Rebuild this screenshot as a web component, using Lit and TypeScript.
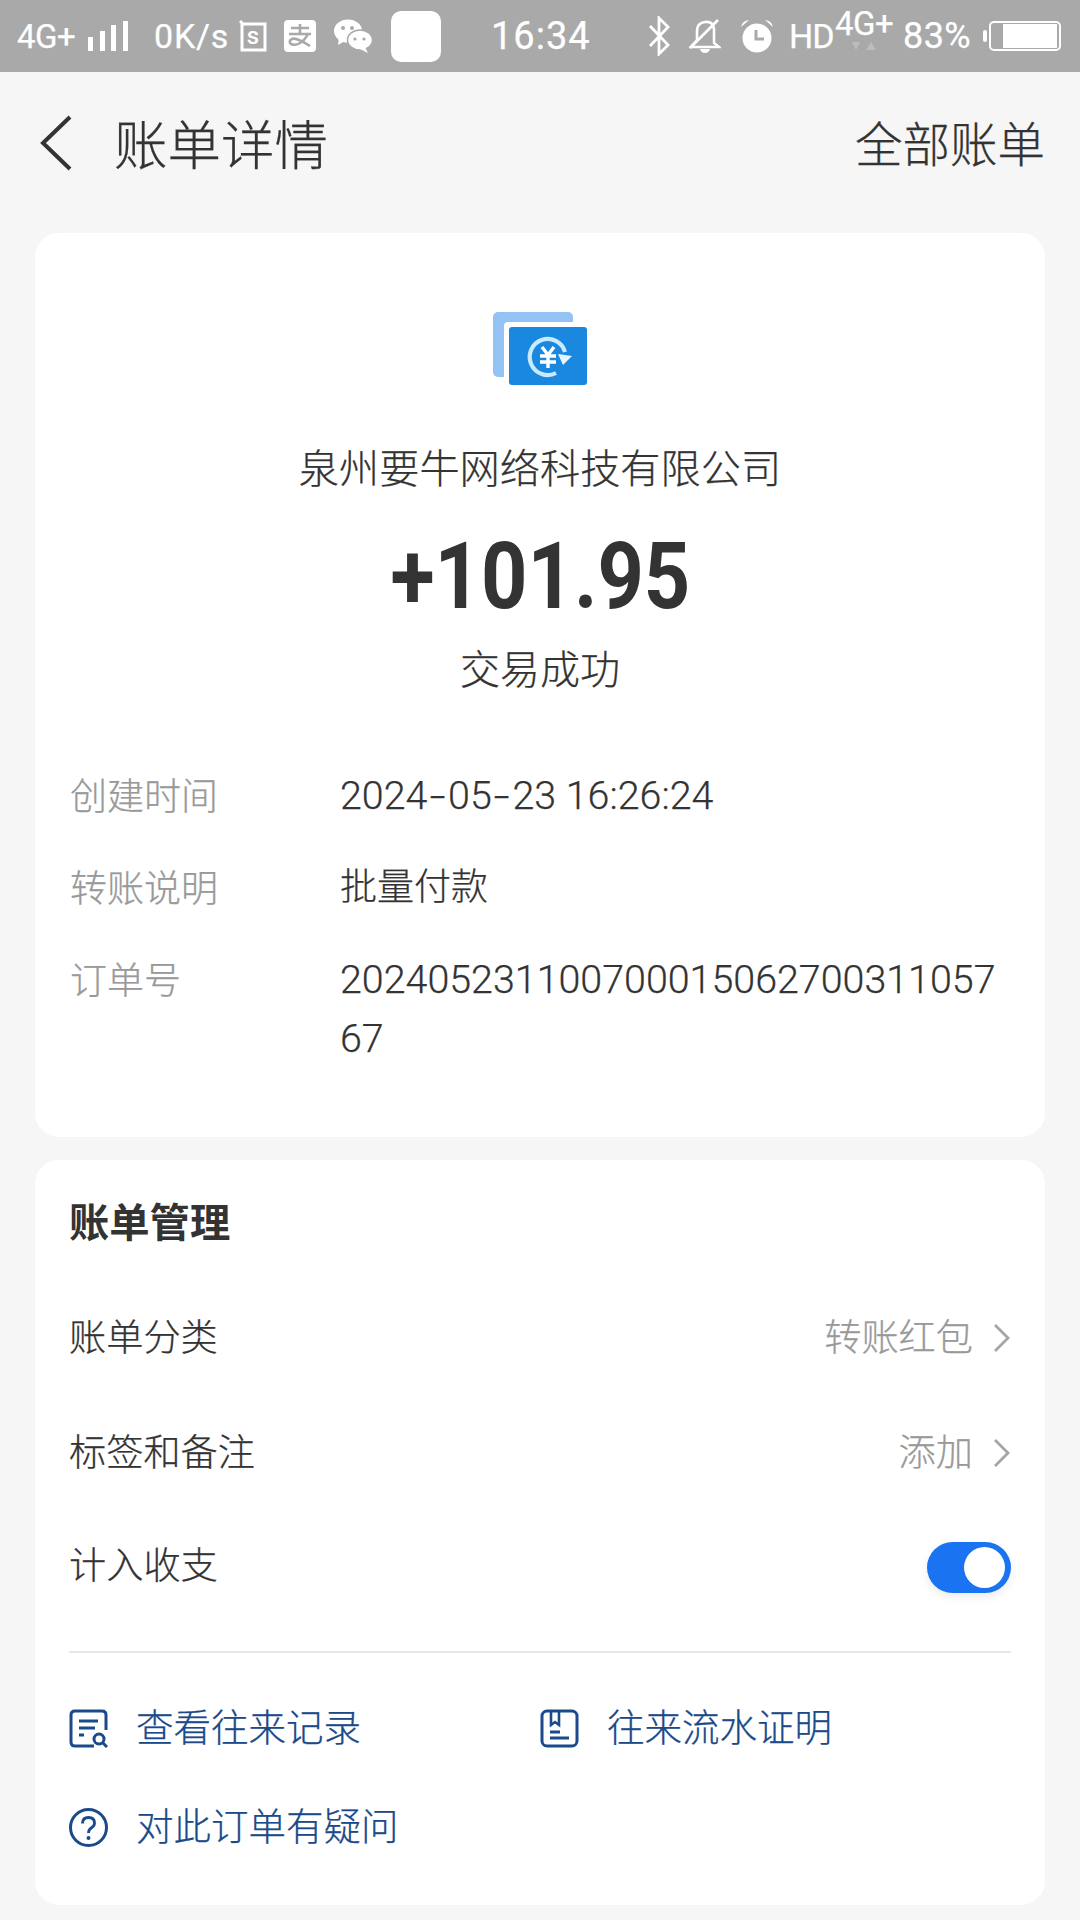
import { LitElement, html, css, svg } from "lit";
import { customElement } from "lit/decorators.js";

const chevron = html`<svg class="chev" width="18" height="30" viewBox="0 0 18 30"><path d="M2 2l13 13L2 28" fill="none" stroke="#a5a5a5" stroke-width="2.8"/></svg>`;

const linkIcons = {
	record: svg`<path d="M37 21V6q0-4-4-4H6Q2 2 2 6v27q0 4 4 4h19" fill="none" stroke="#1a4a8a" stroke-width="3"/>
		<path d="M10 12h19M10 19h16M10 26h5" stroke="#1a4a8a" stroke-width="3"/>
		<circle cx="30" cy="30" r="5" fill="none" stroke="#1a4a8a" stroke-width="3"/>
		<path d="M34 34l4 4" stroke="#1a4a8a" stroke-width="3"/>`,
	proof: svg`<rect x="2" y="2" width="35" height="35" rx="5" fill="none" stroke="#1a4a8a" stroke-width="3"/>
		<path d="M11 2v14l4-3 4 3V2" fill="none" stroke="#1a4a8a" stroke-width="2.600"/>
		<path d="M10 23h10M10 29h19" stroke="#1a4a8a" stroke-width="3"/>`,
	help: svg`<circle cx="19.5" cy="19.5" r="18" fill="none" stroke="#1a4a8a" stroke-width="3"/>
		<path d="M13.5 15.500q0-6 6-6t6 5.500q0 3-3 4.800t-3 5.200" fill="none" stroke="#1a4a8a" stroke-width="2.800"/>
		<circle cx="19.500" cy="30" r="2" fill="#1a4a8a"/>`,
};

@customElement("status-bar")
export class StatusBar extends LitElement {
	static styles = css`
	:host {
		display: flex;
		align-items: center;
		height: 72px;
		background: #a9a9a9;
		color: #fff;
		font-family: Roboto, "Noto Sans", sans-serif;
		font-weight: 400;
		font-size: 33px;
		white-space: nowrap;
	}
	svg { display: block; flex: none; }
	span { display: block; flex: none; }
	.net { margin-left: 17px; width: 59px; letter-spacing: -0.5px; }
	.bars { margin-left: 11px; }
	.speed { margin-left: 25px; width: 74px; font-size: 34px; letter-spacing: 0.8px; }
	.sim { margin-left: 11px; }
	.ali { margin-left: 17px; }
	.wx { margin-left: 18px; }
	.blank { margin-left: 19px; width: 50px; height: 51px; border-radius: 10px; background: #fff; }
	.time { margin-left: 50px; width: 99px; font-size: 38px; letter-spacing: 1px; }
	.bt { margin-left: 58px; }
	.bell { margin-left: 19px; }
	.clock { margin-left: 19px; }
	.hd { margin-left: 15px; width: 41px; font-size: 34px; letter-spacing: -1px; }
	.net2 { margin-left: 5px; width: 58px; display: flex; flex-direction: column; align-items: center; height: 52px; margin-top: -6px; }
	.net2 span { line-height: 34px; font-size: 33px; letter-spacing: -0.5px; }
	.pct { margin-left: 10px; width: 71px; font-size: 36px; letter-spacing: 0.4px; }
	.batt { margin-left: 9px; }
	`;

	render() {
		return html`
<span class="net">4G+</span>
<svg class="bars" width="42" height="32" viewBox="0 0 42 32" fill="#fff">
	<rect x="1" y="17" width="5" height="14"/><rect x="13" y="11" width="5" height="20"/>
	<rect x="24" y="5" width="5" height="26"/><rect x="36" y="1" width="5" height="30"/>
</svg>
<span class="speed">0K/s</span>
<svg class="sim" width="28" height="32" viewBox="0 0 28 32">
	<path d="M1 1l3 3h22v26H3V3" fill="none" stroke="#fff" stroke-width="3"/>
	<text x="14" y="24" text-anchor="middle" fill="#fff" font-size="24" font-weight="500" font-family="Roboto, sans-serif">s</text>
</svg>
<svg class="ali" width="32" height="32" viewBox="0 0 32 32">
	<rect width="32" height="32" rx="4" fill="#fff"/>
	<path d="M7 8h18M16 4v9M5 14h22M24 14q-3 6-8 9t-9 1q-3-3 1-5t18 7" fill="none" stroke="#a9a9a9" stroke-width="2.600"/>
</svg>
<svg class="wx" width="38" height="34" viewBox="0 0 38 34">
	<ellipse cx="14" cy="12" rx="14" ry="11.500" fill="#fff"/>
	<path d="M5 19l-1 7 7-4z" fill="#fff"/>
	<ellipse cx="26" cy="21" rx="12.500" ry="10" fill="#fff" stroke="#a9a9a9" stroke-width="1.500"/>
	<path d="M31 28l3 6-8-4z" fill="#fff"/>
	<circle cx="9" cy="9" r="2" fill="#a9a9a9"/><circle cx="18" cy="9" r="2" fill="#a9a9a9"/>
	<circle cx="21" cy="20" r="1.600" fill="#a9a9a9"/><circle cx="30" cy="20" r="1.600" fill="#a9a9a9"/>
</svg>
<span class="blank"></span>
<span class="time">16:34</span>
<svg class="bt" width="22" height="40" viewBox="0 0 22 40">
	<path d="M2 10l18 19-9 9V2l9 9L2 30" fill="none" stroke="#fff" stroke-width="2.800"/>
</svg>
<svg class="bell" width="32" height="36" viewBox="0 0 32 36">
	<path d="M8 22V13q0-8 8-9t9 7v14l5 4H2z" fill="none" stroke="#fff" stroke-width="2.600"/>
	<path d="M11 31h10q-1 4-5 4t-5-4z" fill="#fff"/>
	<path d="M1 30L29 2" stroke="#fff" stroke-width="2.600"/>
</svg>
<svg class="clock" width="34" height="34" viewBox="0 0 34 34">
	<circle cx="17" cy="19" r="14.500" fill="#fff"/>
	<path d="M1 8q1-6 8-7zM33 8q-1-6-8-7z" fill="#fff"/>
	<path d="M16 11v9h8" fill="none" stroke="#a9a9a9" stroke-width="3"/>
</svg>
<span class="hd">HD</span>
<span class="net2">
	<span>4G+</span>
	<svg width="26" height="10" viewBox="0 0 26 10" fill="#bcbcbc"><path d="M1 1h8L5 9zM15 9l5-8 5 8z"/></svg>
</span>
<span class="pct">83%</span>
<svg class="batt" width="78" height="32" viewBox="0 0 78 32">
	<rect x="0" y="10" width="4" height="12" rx="2" fill="#fff"/>
	<rect x="7" y="2" width="70" height="28" rx="4" fill="none" stroke="#fff" stroke-width="2"/>
	<rect x="20" y="4" width="54" height="24" fill="#fff"/>
</svg>
		`;
	}
}

@customElement("app-root")
export class AppRoot extends LitElement {
	static styles = css`
	:host {
		display: block;
		width: 1080px;
		height: 1920px;
		overflow: hidden;
		background: #f6f6f6;
		color: #333;
		font-family: "Noto Sans CJK SC", sans-serif;
		font-weight: 300;
		-webkit-text-stroke: 0.25px;
	}

	.nav {
		display: flex;
		align-items: center;
		height: 142px;
		padding: 0 35px 0 40px;
	}
	.nav svg { display: block; margin-right: 42px; }
	.nav h1 { margin: 0 0 2px; flex: 1; font-size: 53.500px; font-weight: 300; line-height: 70px; }
	.nav span { font-size: 47.500px; margin-bottom: 4px; }

	.card {
		margin: 0 35px;
		background: #fff;
		border-radius: 24px;
		box-sizing: border-box;
	}

	.summary { margin-top: 19px; padding: 79px 35px 69px; height: 904px; }
	.head { display: flex; flex-direction: column; align-items: center; }
	.company { margin-top: 50px; font-size: 40.200px; line-height: 60px; }
	.amount {
		margin-top: 26px;
		font-family: Roboto, sans-serif;
		font-size: 92px;
		font-weight: 700;
		line-height: 110px;
		transform: scaleX(0.88);
		-webkit-text-stroke: 0;
	}
	.state { margin-top: 5px; font-size: 40px; line-height: 60px; }

	.rows { margin-top: 69px; display: flex; flex-direction: column; gap: 33px; }
	.row { display: grid; grid-template-columns: 270px 1fr; line-height: 59px; }
	.row label { font-size: 37px; color: #999; line-height: 56px; }
	.row div {
		font-family: Roboto, "Noto Sans CJK SC", sans-serif;
		font-size: 39.400px;
		font-weight: 300;
		width: 665px;
		word-break: break-all;
	}
	.row div.zh { font-size: 37px; }
	.dash { display: inline-block; margin: 0 4.700px; transform: scaleX(1.45); }

	.manage { margin-top: 23px; padding: 30px 34px 49px; height: 745px; }
	.manage h2 { margin: 0 0 30px; font-size: 40.300px; font-weight: 700; line-height: 60px; -webkit-text-stroke: 0; }
	.item {
		display: flex;
		align-items: center;
		justify-content: space-between;
		height: 115px;
		font-size: 37.200px;
	}
	.text { margin-bottom: 6px; }
	.item.last .text { margin-bottom: 10px; }
	.value { display: flex; align-items: center; color: #999; }
	.chev { margin-left: 20px; }

	.toggle {
		position: relative;
		width: 84px;
		height: 51px;
		border-radius: 26px;
		background: #1a73f0;
		box-shadow: 0 4px 10px rgba(0, 0, 0, 0.08);
	}
	.toggle i {
		position: absolute;
		top: 5px;
		right: 6px;
		width: 41px;
		height: 41px;
		border-radius: 50%;
		background: #fff;
	}

	.line { margin-top: 26px; height: 2px; background: #e8e8e8; }

	.links {
		margin-top: 45px;
		display: grid;
		grid-template-columns: 471px 1fr;
		row-gap: 39px;
	}
	.link {
		display: flex;
		align-items: center;
		height: 60px;
		color: #1a4a8a;
		font-size: 37.500px;
	}
	.link span { margin-bottom: 8px; }
	.link svg { display: block; margin-right: 28px; flex: none; }
	`;

	renderRow(label: string, value: unknown, zh = false) {
		return html`<div class="row"><label>${label}</label><div class="${zh ? "zh" : ""}">${value}</div></div>`;
	}

	renderLink(icon: keyof typeof linkIcons, text: string) {
		return html`<div class="link"><svg width="39" height="39" viewBox="0 0 39 39">${linkIcons[icon]}</svg><span>${text}</span></div>`;
	}

	render() {
		const dash = html`<span class="dash">-</span>`;
		return html`
<status-bar></status-bar>
<div class="nav" lang="zh-CN">
	<svg width="32" height="56" viewBox="0 0 32 56"><path d="M30 2L3 28l27 26" fill="none" stroke="#333" stroke-width="4"/></svg>
	<h1>账单详情</h1>
	<span>全部账单</span>
</div>

<section class="card summary" lang="zh-CN">
	<div class="head">
		<svg width="96" height="74" viewBox="0 0 96 74">
			<rect x="1" y="0" width="80" height="65" rx="5" fill="#93c3f5"/>
			<rect x="12" y="10" width="84" height="64" rx="4" fill="#fff"/>
			<rect x="17" y="15" width="78" height="58" rx="3" fill="#1b88e0"/>
			<path d="M64 61A18 18 0 1 1 73 40" fill="none" stroke="#c8eaff" stroke-width="4.200"/>
			<path d="M66 42l14 2-9 9z" fill="#e4f5ff"/>
			<path d="M50 35l6 8 6-8M48 44h16M48 50h16M56 43v13" fill="none" stroke="#fff" stroke-width="3.400"/>
		</svg>
		<div class="company">泉州要牛网络科技有限公司</div>
		<div class="amount">+101.95</div>
		<div class="state">交易成功</div>
	</div>
	<div class="rows">
		${this.renderRow("创建时间", html`2024${dash}05${dash}23 16:26:24`)}
		${this.renderRow("转账说明", "批量付款", true)}
		${this.renderRow("订单号", "20240523110070001506270031105767")}
	</div>
</section>

<section class="card manage" lang="zh-CN">
	<h2>账单管理</h2>
	<div class="item"><span class="text">账单分类</span><span class="value"><span class="text">转账红包</span>${chevron}</span></div>
	<div class="item"><span class="text">标签和备注</span><span class="value"><span class="text">添加</span>${chevron}</span></div>
	<div class="item last"><span class="text">计入收支</span><span class="toggle"><i></i></span></div>
	<div class="line"></div>
	<div class="links">
		${this.renderLink("record", "查看往来记录")}
		${this.renderLink("proof", "往来流水证明")}
		${this.renderLink("help", "对此订单有疑问")}
	</div>
</section>
		`;
	}
}
